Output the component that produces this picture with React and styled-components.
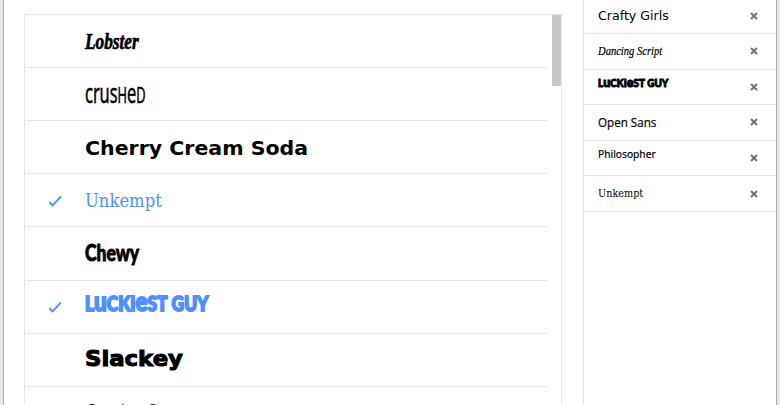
import React from 'react';
import styled, { createGlobalStyle, css } from 'styled-components';

const faces = {
    lobster: { family: 'Liberation Serif', size: 24, weight: 700, italic: true, stretch: 0.72, stroke: 0.7 },
    crushed: { family: 'Open Sans', size: 27, weight: 400, stretch: 0.61, stroke: 0.6, lift: 1 },
    cherry: { family: 'DejaVu Sans', size: 20, weight: 700, stretch: 1.025 },
    unkempt: { family: 'DejaVu Serif', size: 19, weight: 400, stretch: 0.865 },
    chewy: { family: 'Lato', size: 23, weight: 900, stretch: 0.76, stroke: 0.9, lift: 1 },
    luckiest: { family: 'Lato', size: 26, weight: 900, stretch: 0.865, stroke: 1.8, lift: 6 },
    slackey: { family: 'DejaVu Sans', size: 21, weight: 700, stretch: 1.085, stroke: 1, lift: 1 },
    coming: { family: 'Lato', size: 20, weight: 300, stretch: 0.88, lift: 3 },
    craftySmall: { family: 'DejaVu Sans', size: 12, weight: 400, stretch: 1.05, lift: -1 },
    dancingSmall: { family: 'Liberation Serif', size: 12, weight: 400, italic: true, stretch: 0.88, stroke: 0.2 },
    luckiestSmall: { family: 'Lato', size: 14, weight: 900, stretch: 0.9, stroke: 1, lift: 4 },
    openSansSmall: { family: 'Open Sans', size: 12, weight: 400, stretch: 0.97, stroke: 0.2, lift: -1 },
    philosopherSmall: { family: 'Noto Sans', size: 11, weight: 400, stretch: 0.93, stroke: 0.2, lift: 4 },
    unkemptSmall: { family: 'DejaVu Serif', size: 11, weight: 400, stretch: 0.88 },
};

const crushedName = <>crus<Caps>h</Caps>e<Caps>d</Caps></>;
const luckiestName = <><Caps>l</Caps>u<Caps>cki</Caps>e<Caps>st guy</Caps></>;

const fonts = [
    { id: 'lobster', name: 'Lobster' },
    { id: 'crushed', name: crushedName },
    { id: 'cherry', name: 'Cherry Cream Soda' },
    { id: 'unkempt', name: 'Unkempt', selected: true },
    { id: 'chewy', name: 'Chewy' },
    { id: 'luckiest', name: luckiestName, selected: true },
    { id: 'slackey', name: 'Slackey' },
    { id: 'coming', name: 'Coming Soon' },
];

const myFonts = [
    { id: 'craftySmall', name: 'Crafty Girls' },
    { id: 'dancingSmall', name: 'Dancing Script' },
    { id: 'luckiestSmall', name: luckiestName },
    { id: 'openSansSmall', name: 'Open Sans' },
    { id: 'philosopherSmall', name: 'Philosopher' },
    { id: 'unkemptSmall', name: 'Unkempt' },
];

export default function App() {
    return (
        <>
            <GlobalStyle />
            <Dialog>
                <FontList>
                    <Rows>
                        {fonts.map(font => (
                            <FontRow key={font.id} $selected={font.selected}>
                                <CheckSlot>{font.selected && <Check />}</CheckSlot>
                                <FontName $face={faces[font.id]}>{font.name}</FontName>
                            </FontRow>
                        ))}
                    </Rows>
                    <ScrollThumb />
                </FontList>
                <MyFonts>
                    {myFonts.map(font => (
                        <MyFontRow key={font.id}>
                            <FontName $face={faces[font.id]}>{font.name}</FontName>
                            <RemoveButton aria-label="Remove"><Cross /></RemoveButton>
                        </MyFontRow>
                    ))}
                </MyFonts>
            </Dialog>
        </>
    )
}

function Caps({ children }) {
    return <SmallCaps>{children}</SmallCaps>;
}

function Check() {
    return (
        <svg width="14" height="12" viewBox="0 0 14 12">
            <path d="M1.2 7.2 L4.6 10.3 L13 1.4" fill="none" stroke="#4d90fe" strokeWidth="1.9" />
        </svg>
    )
}

function Cross() {
    return (
        <svg width="8" height="8" viewBox="0 0 8 8">
            <path d="M1 1 L7 7 M7 1 L1 7" stroke="#777" strokeWidth="2.2" />
        </svg>
    )
}

const GlobalStyle = createGlobalStyle`
    * {
        box-sizing: border-box;
    }

    body {
        margin: 0;
        overflow: hidden;
        background: #e9e9e9;
    }
`;

const Dialog = styled.div`
    display: flex;
    width: 774px;
    height: 405px;
    margin-left: 3px;
    overflow: hidden;
    background: #fff;
    border: solid #acacac;
    border-width: 0 1px;
`;

const FontList = styled.div`
    display: flex;
    justify-content: space-between;
    flex: none;
    width: 538px;
    height: 420px;
    margin: 14px 0 0 20px;
    border: 1px solid #e5e5e5;
    border-right: 0;
`;

const Rows = styled.div`
    width: 522px;
    padding-left: 1px;
`;

const FontRow = styled.div`
    display: flex;
    align-items: center;
    height: 53.12px;
    padding-top: 1px;
    border-bottom: 1px solid #e5e5e5;
    color: ${props => props.$selected ? '#4d90fe' : '#000'};
`;

const CheckSlot = styled.div`
    display: flex;
    flex: none;
    width: 59px;
    padding-left: 22px;
`;

const SmallCaps = styled.span`
    font-variant-caps: all-small-caps;
    font-size: 1.12em;
    line-height: 0;
`;

const FontName = styled.span`
    display: inline-block;
    white-space: nowrap;
    line-height: 1.2;
    font-family: ${props => `'${props.$face.family}'`}, sans-serif;
    font-size: ${props => props.$face.size}px;
    font-weight: ${props => props.$face.weight};
    transform: translateY(${props => -(props.$face.lift || 0)}px) scaleX(${props => props.$face.stretch});
    transform-origin: left center;

    ${props => props.$face.italic && css`
        font-style: italic;
    `}

    ${props => props.$face.stroke && css`
        -webkit-text-stroke: ${props.$face.stroke}px currentColor;
    `}
`;

const ScrollThumb = styled.div`
    width: 10px;
    height: 420px;
    border-right: 1px solid #e5e5e5;
    background: linear-gradient(#c8c8c8, #c8c8c8) 0 0 / 100% 71px no-repeat;
    background-origin: border-box;
`;

const MyFonts = styled.div`
    flex: 1;
    height: 405px;
    margin-left: 21px;
    border-left: 1px solid #e2e2e2;
`;

const MyFontRow = styled.div`
    display: flex;
    align-items: center;
    justify-content: space-between;
    height: 35.6px;
    padding: 0 18px 0 14px;
    border-bottom: 1px solid #e5e5e5;
    color: #000;

    &:first-child {
        height: 34px;
        padding-bottom: 2px;
    }
`;

const RemoveButton = styled.button`
    display: flex;
    padding: 0;
    border: 0;
    background: none;
`;
